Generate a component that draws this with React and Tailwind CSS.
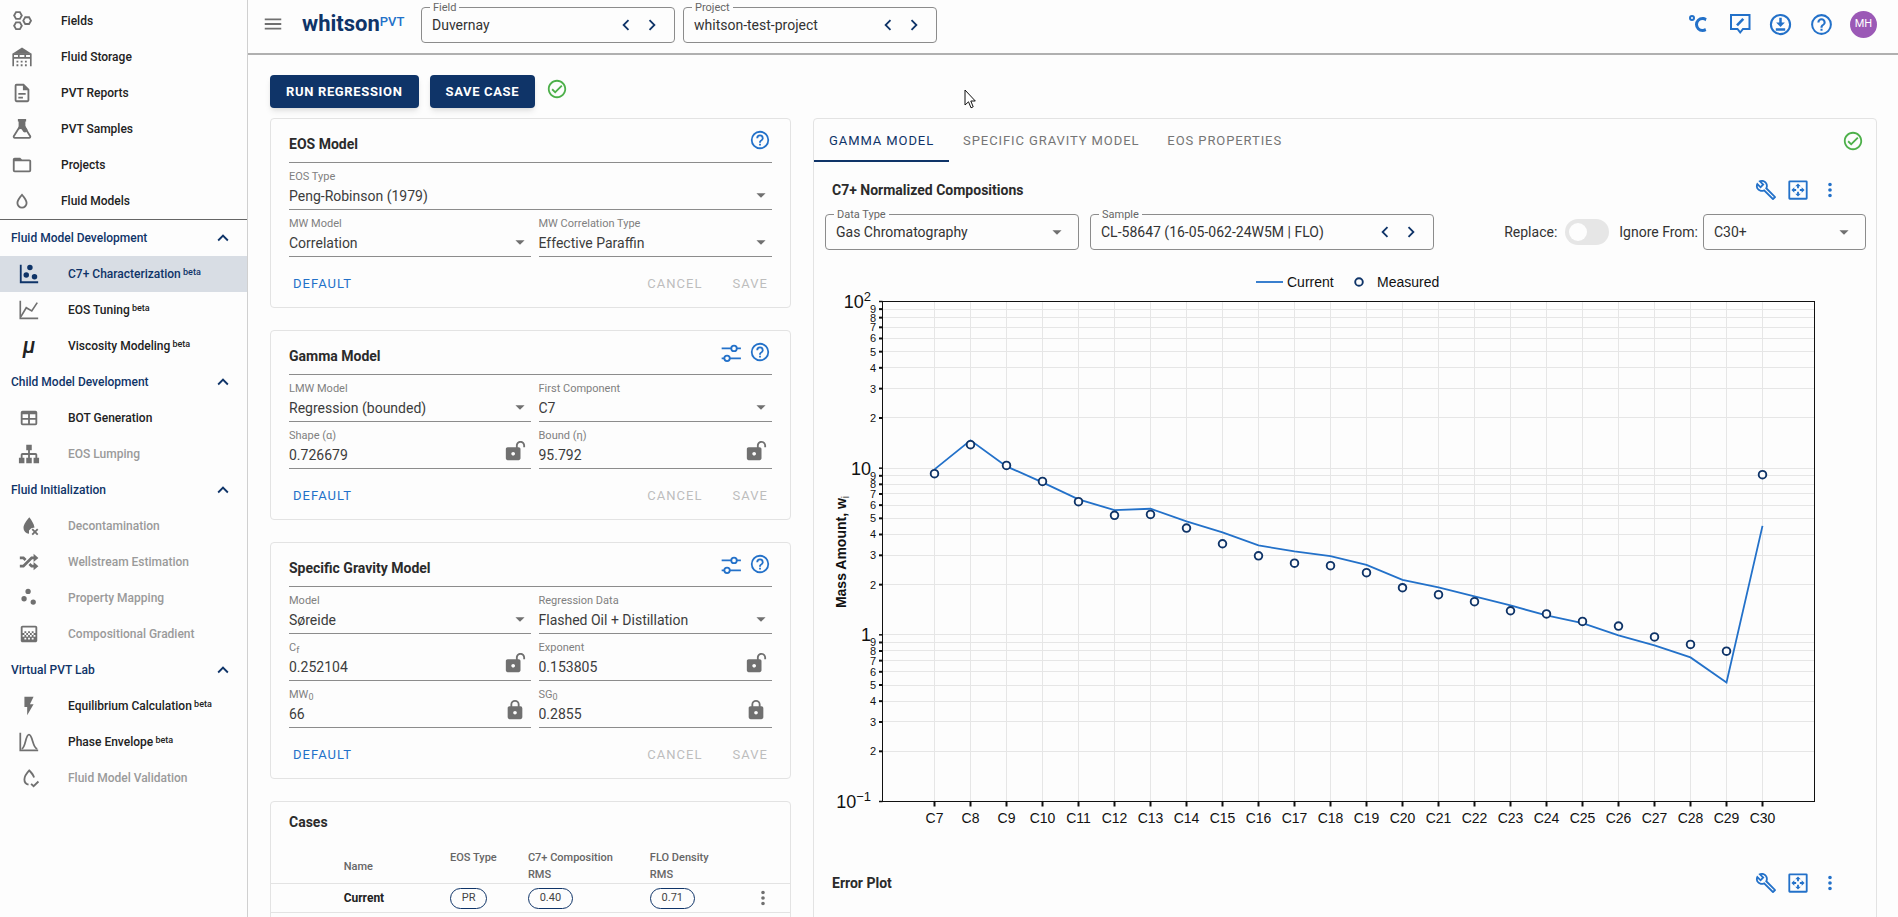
import { useId } from "react";
import { clsx } from "clsx";
import { MdGradient } from "react-icons/md";

const PATHS = {
  help: "M11,18H13V16H11V18M12,2A10,10 0 0,0 2,12A10,10 0 0,0 12,22A10,10 0 0,0 22,12A10,10 0 0,0 12,2M12,20C7.59,20 4,16.41 4,12C4,7.59 7.59,4 12,4C16.41,4 20,7.59 20,12C20,16.41 16.41,20 12,20M12,6A4,4 0 0,0 8,10H10A2,2 0 0,1 12,8A2,2 0 0,1 14,10C14,12 11,11.75 11,15H13C13,12.75 16,12.5 16,10A4,4 0 0,0 12,6Z",
  check: "M12 2C6.5 2 2 6.5 2 12S6.5 22 12 22 22 17.5 22 12 17.5 2 12 2M12 20C7.59 20 4 16.41 4 12S7.59 4 12 4 20 7.59 20 12 16.41 20 12 20M16.59 7.58L10 14.17L7.41 11.59L6 13L10 17L18 9L16.59 7.58Z",
  up: "M7.41,15.41L12,10.83L16.59,15.41L18,14L12,8L6,14L7.41,15.41Z",
  left: "M15.41,16.58L10.83,12L15.41,7.41L14,6L8,12L14,18L15.41,16.58Z",
  right: "M8.59,16.58L13.17,12L8.59,7.41L10,6L16,12L10,18L8.59,16.58Z",
  menu: "M3,6H21V8H3V6M3,11H21V13H3V11M3,16H21V18H3V16Z",
  down: "M7,10L12,15L17,10H7Z",
  dots: "M12,16A2,2 0 0,1 14,18A2,2 0 0,1 12,20A2,2 0 0,1 10,18A2,2 0 0,1 12,16M12,10A2,2 0 0,1 14,12A2,2 0 0,1 12,14A2,2 0 0,1 10,12A2,2 0 0,1 12,10M12,4A2,2 0 0,1 14,6A2,2 0 0,1 12,8A2,2 0 0,1 10,6A2,2 0 0,1 12,4Z",
  lock: "M12,17A2,2 0 0,0 14,15C14,13.89 13.1,13 12,13A2,2 0 0,0 10,15A2,2 0 0,0 12,17M18,8A2,2 0 0,1 20,10V20A2,2 0 0,1 18,22H6A2,2 0 0,1 4,20V10C4,8.89 4.9,8 6,8H7V6A5,5 0 0,1 12,1A5,5 0 0,1 17,6V8H18M12,3A3,3 0 0,0 9,6V8H15V6A3,3 0 0,0 12,3Z",
  unlock: "M18 1C15.24 1 13 3.24 13 6V8H4C2.9 8 2 8.89 2 10V20C2 21.11 2.9 22 4 22H16C17.11 22 18 21.11 18 20V10C18 8.9 17.11 8 16 8H15V6C15 4.34 16.34 3 18 3C19.66 3 21 4.34 21 6V8H23V6C23 3.24 20.76 1 18 1M10 13C11.1 13 12 13.89 12 15C12 16.11 11.11 17 10 17C8.9 17 8 16.11 8 15C8 13.9 8.9 13 10 13Z",
  wrench: "M22.61,19L13.53,9.91C14.46,7.57 14,4.81 12.09,2.91C9.79,0.61 6.21,0.4 3.66,2.26L7.5,6.11L6.08,7.52L2.25,3.69C0.39,6.23 0.6,9.82 2.9,12.11C4.76,13.97 7.47,14.46 9.79,13.59L18.9,22.7C19.29,23.09 19.92,23.09 20.31,22.7L22.61,20.4C23,20 23,19.39 22.61,19M19.61,20.59L10.15,11.13C9.54,11.58 8.86,11.85 8.15,11.95C6.79,12.15 5.36,11.74 4.32,10.7C3.37,9.76 2.93,8.5 3,7.26L6.09,10.35L10.33,6.11L7.24,3C8.48,2.95 9.73,3.39 10.68,4.33C11.76,5.41 12.17,6.9 11.92,8.29C11.8,9 11.5,9.66 11.04,10.25L20.5,19.7L19.61,20.59Z",
  fit: "M3,1.5H21A1.5,1.5 0 0,1 22.5,3V21A1.5,1.5 0 0,1 21,22.5H3A1.5,1.5 0 0,1 1.5,21V3A1.5,1.5 0 0,1 3,1.5M3.5,3.5V20.5H20.5V3.5H3.5M12,4.8L15,8H13V10H11V8H9L12,4.8M12,19.2L9,16H11V14H13V16H15L12,19.2M4.8,12L8,9V11H10V13H8V15L4.8,12M19.2,12L16,15V13H14V11H16V9L19.2,12Z",
  flash: "M7,2V13H10V22L17,10H13L17,2H7Z",
  sitemap: "M9,2V8H11V11H5C3.89,11 3,11.89 3,13V16H1V22H7V16H5V13H11V16H9V22H15V16H13V13H19V16H17V22H23V16H21V13C21,11.89 20.11,11 19,11H13V8H15V2H9Z",
  shuffle: "M17,3L22.25,7.5L17,12L22.25,16.5L17,21V18H14.26L11.44,15.18L13.56,13.06L15.5,15H17V9H15.5L6.5,18H2V15H5.26L14.26,6H17V3M2,6H6.5L9.32,8.82L7.2,10.94L5.26,9H2V6Z",
  scatter: "M2,2H4V20H22V22H2V2M9,10A3,3 0 0,1 12,13A3,3 0 0,1 9,16A3,3 0 0,1 6,13A3,3 0 0,1 9,10M13,2A3,3 0 0,1 16,5A3,3 0 0,1 13,8A3,3 0 0,1 10,5A3,3 0 0,1 13,2M18,12A3,3 0 0,1 21,15A3,3 0 0,1 18,18A3,3 0 0,1 15,15A3,3 0 0,1 18,12Z",
  celsius: "M16.5,5C18.05,5 19.5,5.47 20.69,6.28L19.53,9.17C18.73,8.44 17.67,8 16.5,8C14,8 12,10 12,12.5C12,15 14,17 16.5,17C17.53,17 18.47,16.66 19.23,16.08L20.37,18.93C19.24,19.61 17.92,20 16.5,20A7.5,7.5 0 0,1 9,12.5A7.5,7.5 0 0,1 16.5,5M6,3A3,3 0 0,1 9,6A3,3 0 0,1 6,9A3,3 0 0,1 3,6A3,3 0 0,1 6,3M6,5A1,1 0 0,0 5,6A1,1 0 0,0 6,7A1,1 0 0,0 7,6A1,1 0 0,0 6,5Z",
  table: "M5,4H19A2,2 0 0,1 21,6V18A2,2 0 0,1 19,20H5A2,2 0 0,1 3,18V6A2,2 0 0,1 5,4M5,8V12H11V8H5M13,8V12H19V8H13M5,14V18H11V14H5M13,14V18H19V14H13Z",
  folder: "M20,18H4V8H20M20,6H12L10,4H4C2.89,4 2,4.89 2,6V18A2,2 0 0,0 4,20H20A2,2 0 0,0 22,18V8C22,6.89 21.1,6 20,6Z",
  file: "M6,2A2,2 0 0,0 4,4V20A2,2 0 0,0 6,22H18A2,2 0 0,0 20,20V8L14,2H6M6,4H13V9H18V20H6V4M8,12V14H16V12H8M8,16V18H13V16H8Z",
  water: "M12,3.77L11.25,4.61C11.25,4.61 9.97,6.06 8.68,7.94C7.39,9.82 6,12.07 6,14.23A6,6 0 0,0 12,20.23A6,6 0 0,0 18,14.23C18,12.07 16.61,9.82 15.32,7.94C14.03,6.06 12.75,4.61 12.75,4.61L12,3.77M12,6.9C12.44,7.42 12.84,7.85 13.68,9.07C14.89,10.83 16,13.07 16,14.23C16,16.45 14.22,18.23 12,18.23C9.78,18.23 8,16.45 8,14.23C8,13.07 9.11,10.83 10.32,9.07C11.16,7.85 11.56,7.42 12,6.9Z",
};

function Icon({ name, className = "size-[22px]" }) {
  return (
    <svg viewBox="0 0 24 24" fill="currentColor" className={clsx("shrink-0", className)} aria-hidden="true">
      <path d={PATHS[name]} />
    </svg>
  );
}

function Line({ children, className = "size-[22px]", width = 2 }) {
  return (
    <svg viewBox="0 0 24 24" fill="none" stroke="currentColor" strokeWidth={width} className={clsx("shrink-0", className)} aria-hidden="true">
      {children}
    </svg>
  );
}

const hex = (x, y) => `M${x - 4.2},${y}L${x - 2.1},${y - 3.7}H${x + 2.1}L${x + 4.2},${y}L${x + 2.1},${y + 3.7}H${x - 2.1}Z`;

const FieldsIcon = () => (
  <Line width={2}>
    <path d={hex(7.6, 6)} />
    <path d={hex(17.6, 11.6)} />
    <path d={hex(7.6, 17.2)} />
  </Line>
);

const StorageIcon = () => (
  <Line width={1.8}>
    <path d="M2.4 22V8.5M21.6 22V8.5M2 8.8H22M2 13H22M8.5 8V13M15.5 8V13" />
    <path d="M1.5 8.5L12 1.5L22.5 8.5Z" fill="currentColor" stroke="none" />
    <path d="M6 17H18M6 21H18" strokeWidth="2" strokeDasharray="2 2.6" />
  </Line>
);

const FlaskIcon = () => (
  <Line width={2}>
    <path d="M9.5 3V9.5L3.2 19.5A1.3 1.3 0 0 0 4.4 21.6H19.6A1.3 1.3 0 0 0 20.8 19.5L14.5 9.5V3" />
    <path d="M7.5 1H16.5V3.8H15.5V8.5L18.2 13C16 17.5 13.5 15.5 12.5 13.5C11 11 9.5 12.5 8.2 12.3L8.5 8.5V3.8H7.5Z" fill="currentColor" stroke="none" />
  </Line>
);

const TuningIcon = () => (
  <Line width={1.8}>
    <path d="M2.5 2V21.2H22" />
    <path d="M3 19.5L9 9.5L15 13L21 4" />
  </Line>
);

const MuIcon = () => <span className="w-[22px] text-center text-[22px] leading-none font-medium italic text-[#222]">μ</span>;

const DropXIcon = () => (
  <Line width={2}>
    <path d="M12.3 2.5C9.5 6 6 10.3 6 14.2A6.2 6.2 0 0 0 12 20.4V17L14.5 14.5L18 13.5C17.5 10 14.8 5.6 12.3 2.5Z" fill="currentColor" stroke="none" />
    <path d="M15.5 15.5L21.5 21.5M21.5 15.5L15.5 21.5" />
  </Line>
);

const MappingIcon = () => (
  <svg viewBox="0 0 24 24" fill="currentColor" className="size-[22px]" aria-hidden="true">
    <circle cx="11" cy="4.8" r="2.9" />
    <circle cx="6.6" cy="12.8" r="2.9" />
    <circle cx="16.6" cy="16.4" r="2.9" />
  </svg>
);

const EnvelopeIcon = () => (
  <Line width={1.9}>
    <path d="M2.5 2V21.2H22" />
    <path d="M4 19.5C8.5 18.5 8 4 12 4S15.8 18.5 21 19.5" />
  </Line>
);

const DropCheckIcon = () => (
  <Line width={2}>
    <path d="M17.5 11.5C17 9 14.5 6 12.3 3.8C9.5 6.8 7 10.6 7 13.6A5.8 5.8 0 0 0 11.5 19.3" />
    <path d="M14.3 18.3L17 21L22.3 15.8" />
  </Line>
);

const TuneIcon = () => (
  <Line width={2}>
    <path d="M1.8 7H12.3M18.2 7H22.8M1.8 17.8H4.8M10.7 17.8H22.8" />
    <circle cx="15.3" cy="7" r="3" />
    <circle cx="7.7" cy="17.8" r="3" />
  </Line>
);

const NAV = [
  { label: "Fields", icon: <FieldsIcon /> },
  { label: "Fluid Storage", icon: <StorageIcon /> },
  { label: "PVT Reports", icon: <Icon name="file" /> },
  { label: "PVT Samples", icon: <FlaskIcon /> },
  { label: "Projects", icon: <Icon name="folder" /> },
  { label: "Fluid Models", icon: <Icon name="water" /> },
];

const SECTIONS = [
  {
    title: "Fluid Model Development",
    items: [
      { label: "C7+ Characterization", beta: true, active: true, icon: <Icon name="scatter" /> },
      { label: "EOS Tuning", beta: true, icon: <TuningIcon /> },
      { label: "Viscosity Modeling", beta: true, icon: <MuIcon /> },
    ],
  },
  {
    title: "Child Model Development",
    items: [
      { label: "BOT Generation", icon: <Icon name="table" /> },
      { label: "EOS Lumping", disabled: true, icon: <Icon name="sitemap" /> },
    ],
  },
  {
    title: "Fluid Initialization",
    items: [
      { label: "Decontamination", disabled: true, icon: <DropXIcon /> },
      { label: "Wellstream Estimation", disabled: true, icon: <Icon name="shuffle" /> },
      { label: "Property Mapping", disabled: true, icon: <MappingIcon /> },
      { label: "Compositional Gradient", disabled: true, icon: <MdGradient className="size-[22px]" /> },
    ],
  },
  {
    title: "Virtual PVT Lab",
    items: [
      { label: "Equilibrium Calculation", beta: true, icon: <Icon name="flash" /> },
      { label: "Phase Envelope", beta: true, icon: <EnvelopeIcon /> },
      { label: "Fluid Model Validation", disabled: true, icon: <DropCheckIcon /> },
    ],
  },
];

function Sidebar() {
  return (
    <nav className="w-62 shrink-0 border-r border-[#d0d0d0] pt-[3px] text-[12px] font-medium">
      {NAV.map((item) => (
        <a key={item.label} href="#" className="flex h-9 items-center pl-[11px] text-[#222]">
          <span className="flex w-[50px] text-[#707070]">{item.icon}</span>
          {item.label}
        </a>
      ))}
      <div className="border-t border-[#666]">
        {SECTIONS.map((section) => (
          <div key={section.title}>
            <button className="flex h-9 w-full items-center justify-between pr-[13px] pl-[11px] text-[#0f3468]">
              {section.title}
              <Icon name="up" />
            </button>
            {section.items.map((item) => (
              <a
                key={item.label}
                href="#"
                className={clsx(
                  "flex h-9 items-center pl-[18px]",
                  item.active && "bg-[#d8dde4] text-[#0f3468]",
                  item.disabled && "text-[#9a9a9a]",
                  !item.active && !item.disabled && "text-[#222]"
                )}
              >
                <span className={clsx("flex w-[50px]", item.active ? "text-[#0f3468]" : "text-[#707070]")}>
                  {item.icon}
                </span>
                <span>
                  {item.label}
                  {item.beta && <sup className="top-[-3px] text-[9px]"> beta</sup>}
                </span>
              </a>
            ))}
          </div>
        ))}
      </div>
    </nav>
  );
}

function OutlinedBox({ label, htmlFor, className, children }) {
  return (
    <div className={clsx("relative flex h-9 items-center rounded border border-[#8c8c8c]", className)}>
      {label && (
        <label htmlFor={htmlFor} className="absolute -top-[7px] left-2 bg-[#fdfdfd] px-[3px] text-[11px] leading-[13px] text-[#666]">
          {label}
        </label>
      )}
      {children}
    </div>
  );
}

function StepperField({ label, value, className }) {
  const id = useId();
  return (
    <OutlinedBox label={label} htmlFor={id} className={className}>
      <input id={id} readOnly value={value} className="min-w-0 flex-1 pl-[10px] text-[14px] text-[#333] outline-none" />
      <div className="flex gap-1 pr-[11px] text-[#0f3468]">
        <button aria-label={`Previous ${label}`}><Icon name="left" /></button>
        <button aria-label={`Next ${label}`}><Icon name="right" /></button>
      </div>
    </OutlinedBox>
  );
}

function OutlinedSelect({ label, name, value, className }) {
  const id = useId();
  return (
    <OutlinedBox label={label} htmlFor={id} className={className}>
      <select id={id} aria-label={label || name} className="h-full w-full appearance-none pl-[10px] text-[14px] text-[#333] outline-none">
        <option>{value}</option>
      </select>
      <Icon name="down" className="pointer-events-none absolute right-[10px] size-[22px] text-[#707070]" />
    </OutlinedBox>
  );
}

function Header() {
  return (
    <header className="flex h-[55px] shrink-0 items-start border-b-2 border-[#b0b0b0] pt-[7px] pr-[21px] pl-[14px]">
      <button aria-label="Toggle menu" className="mt-[6px] text-[#707070]"><Icon name="menu" /></button>
      <a href="#" className="flex w-[137px] pl-[18px] leading-[34px] text-[#0f3468]">
        <span className="text-[22px] font-bold">whitson</span>
        <span className="text-[13px] leading-[29px] font-medium text-[#2371c9]">PVT</span>
      </a>
      <StepperField label="Field" value="Duvernay" className="w-[254px]" />
      <StepperField label="Project" value="whitson-test-project" className="ml-2 w-[254px]" />
      <div className="ml-auto flex h-[34px] items-center gap-4 text-[#2371c9]">
        <button aria-label="Units" className="mr-0.5"><Icon name="celsius" className="size-[24px]" /></button>
        <button aria-label="Feedback">
          <Line className="size-[24px]">
            <path d="M3 3H21.5V17H15L12.2 20.5L9.5 17H3Z" />
            <path d="M9 13.3L15.3 6.8" strokeWidth="2.6" />
          </Line>
        </button>
        <button aria-label="Download">
          <Line className="size-[25px]">
            <circle cx="12" cy="12" r="9.2" />
            <path d="M7.5 16.8H16.5M12 5.5V11" strokeWidth="2.4" />
            <path d="M7.8 10H16.2L12 14.3Z" fill="currentColor" stroke="none" />
          </Line>
        </button>
        <button aria-label="Help"><Icon name="help" className="size-[25px]" /></button>
        <button className="size-[27px] rounded-full bg-[#9b59b6] text-[11px] text-white">MH</button>
      </div>
    </header>
  );
}

function LineField({ label, value, lock, className }) {
  const id = useId();
  return (
    <div className={clsx("h-[47px]", className)}>
      <div className="relative flex h-full flex-col border-b border-[#8c8c8c] pt-[7px]">
        <label htmlFor={id} className="h-[14px] text-[11px] leading-[14px] text-[#808080] [&_sub]:text-[9px]">{label}</label>
        {lock ? (
          <>
            <input id={id} defaultValue={value} className="h-6 w-full pr-8 text-[14px] text-[#3c3c3c] outline-none" />
            <button aria-label={lock} className="absolute right-[5px] bottom-[6px] text-[#707070]"><Icon name={lock} /></button>
          </>
        ) : (
          <>
            <select id={id} className="h-6 w-full appearance-none text-[14px] text-[#3c3c3c] outline-none">
              <option>{value}</option>
            </select>
            <Icon name="down" className="pointer-events-none absolute right-0 bottom-[3px] size-[22px] text-[#707070]" />
          </>
        )}
      </div>
    </div>
  );
}

function ModelCard({ title, tune, children }) {
  return (
    <section className="rounded border border-[#e3e3e3] px-[18px]">
      <div className="flex h-11 items-center border-b border-[#8c8c8c] pt-[7px]">
        <h2 className="flex-1 text-[14px] font-bold text-[#2b2b2b]">{title}</h2>
        <div className="flex gap-[7px] pr-[1px] pb-2 text-[#2371c9]">
          {tune && <button aria-label="Settings" className="pt-[2px]"><TuneIcon /></button>}
          <button aria-label="Help"><Icon name="help" /></button>
        </div>
      </div>
      <div className="grid grid-cols-2">{children}</div>
      <div className="flex h-[50px] items-center px-1 pt-1 text-[13px] tracking-[0.08em] text-[#bdbdbd]">
        <button className="mr-auto text-[#2371c9]">DEFAULT</button>
        <button disabled>CANCEL</button>
        <button disabled className="ml-[30px]">SAVE</button>
      </div>
    </section>
  );
}

function Chip({ children, className }) {
  return (
    <span className={clsx("flex h-[21px] items-center justify-center rounded-full border border-[#0f3468] text-[11px] text-[#444]", className)}>
      {children}
    </span>
  );
}

function CasesCard() {
  return (
    <section className="rounded border border-[#e3e3e3]">
      <h2 className="pt-[10px] pl-[18px] text-[14px] leading-5 font-bold text-[#2b2b2b]">Cases</h2>
      <table className="mt-[17px] w-full table-fixed text-left text-[11px]">
        <colgroup>
          <col className="w-[14%]" />
          <col className="w-[20.5%]" />
          <col className="w-[15%]" />
          <col className="w-[23.5%]" />
          <col className="w-[17%]" />
          <col />
        </colgroup>
        <thead className="text-[#666]">
          <tr className="h-[34px] border-b border-[#e3e3e3] align-top leading-[17px] [&>th]:font-medium">
            <th />
            <th className="align-middle">Name</th>
            <th>EOS Type</th>
            <th>C7+ Composition<br />RMS</th>
            <th>FLO Density<br />RMS</th>
            <th />
          </tr>
        </thead>
        <tbody>
          <tr className="h-[29px] border-b border-[#e3e3e3]">
            <td />
            <td className="text-[12px] font-bold text-[#222]">Current</td>
            <td><Chip className="w-[37px]">PR</Chip></td>
            <td><Chip className="w-[45px]">0.40</Chip></td>
            <td><Chip className="w-[45px]">0.71</Chip></td>
            <td>
              <button aria-label="Case actions" className="flex pl-[14px] text-[#707070]"><Icon name="dots" /></button>
            </td>
          </tr>
          <tr className="h-[29px]"><td colSpan={6} /></tr>
        </tbody>
      </table>
    </section>
  );
}

const MEASURED = [9.27, 13.84, 10.39, 8.33, 6.29, 5.21, 5.28, 4.37, 3.52, 2.98, 2.69, 2.6, 2.36, 1.917, 1.741, 1.58, 1.395, 1.335, 1.203, 1.128, 0.971, 0.876, 0.798, 9.14];
const CURRENT = [9.84, 14.69, 10.25, 8.22, 6.5, 5.6, 5.71, 4.79, 4.12, 3.44, 3.17, 2.97, 2.63, 2.14, 1.925, 1.7, 1.501, 1.307, 1.176, 0.992, 0.864, 0.732, 0.518, 4.505];

const PLOT = { left: 68.5, right: 1000.5, top: 39.5, bottom: 539.5 };
const xAt = (i) => 120.5 + i * 36;
const yAt = (v) => PLOT.top + ((2 - Math.log10(v)) * (PLOT.bottom - PLOT.top)) / 3;
const snap = (y) => Math.floor(y) + 0.5;

const MINOR = [0.1, 1, 10].flatMap((decade) => [2, 3, 4, 5, 6, 7, 8, 9].map((n) => ({ n, v: n * decade })));

function CompositionChart() {
  return (
    <svg viewBox="0 0 1062 598" className="block w-full font-['Liberation_Sans',sans-serif] text-[14px]" role="img" aria-label="C7+ normalized compositions" fill="#111">
      <line x1="442" x2="469" y1="20" y2="20" stroke="#2371c9" strokeWidth="1.8" />
      <text x="473" y="25">Current</text>
      <circle cx="545" cy="20" r="3.8" fill="none" stroke="#0f3468" strokeWidth="1.9" />
      <text x="563" y="25">Measured</text>

      <g stroke="#e6e6e6">
        {MEASURED.map((_, i) => (
          <line key={i} x1={xAt(i)} x2={xAt(i)} y1={PLOT.top} y2={PLOT.bottom} />
        ))}
        {[...MINOR.map((m) => m.v), 1, 10].map((v) => (
          <line key={v} x1={PLOT.left} x2={PLOT.right} y1={snap(yAt(v))} y2={snap(yAt(v))} />
        ))}
      </g>
      <rect x={PLOT.left} y={PLOT.top} width={PLOT.right - PLOT.left} height={PLOT.bottom - PLOT.top} fill="none" stroke="#111" />

      <g textAnchor="middle">
        {MEASURED.map((_, i) => (
          <g key={i}>
            <line x1={xAt(i)} x2={xAt(i)} y1={PLOT.bottom} y2={PLOT.bottom + 5} stroke="#111" strokeWidth="2" />
            <text x={xAt(i)} y="561">{`C${i + 7}`}</text>
          </g>
        ))}
      </g>
      <g textAnchor="end" className="text-[11px]">
        {MINOR.map(({ n, v }) => (
          <g key={v}>
            <line x1={PLOT.left - 3.5} x2={PLOT.left} y1={yAt(v)} y2={yAt(v)} stroke="#111" strokeWidth="2" />
            <text x="62" y={yAt(v) + 4}>{n}</text>
          </g>
        ))}
      </g>
      {[100, 10, 1, 0.1].map((v) => (
        <line key={v} x1={PLOT.left - 3.5} x2={PLOT.left} y1={yAt(v)} y2={yAt(v)} stroke="#111" strokeWidth="1.5" />
      ))}
      <g textAnchor="end" className="text-[18px]">
        <text x="57" y="46">10<tspan dy="-7" className="text-[13px]">2</tspan></text>
        <text x="57" y="213">10</text>
        <text x="57" y="379">1</text>
        <text x="57" y="546">10<tspan dy="-7" className="text-[13px]">−1</tspan></text>
      </g>
      <text transform="translate(32 290) rotate(-90)" textAnchor="middle" className="font-bold">
        Mass Amount, w<tspan dy="3" className="text-[10px] font-normal">i</tspan>
      </text>

      <polyline points={CURRENT.map((v, i) => `${xAt(i)},${yAt(v)}`).join(" ")} fill="none" stroke="#2371c9" strokeWidth="1.8" />
      {MEASURED.map((v, i) => (
        <circle key={i} cx={xAt(i)} cy={yAt(v)} r="3.8" fill="#fdfdfd" stroke="#0f3468" strokeWidth="1.9" />
      ))}
    </svg>
  );
}

function PlotHeader({ title }) {
  return (
    <div className="flex h-10 items-center pr-[35px] pl-[18px]">
      <h2 className="flex-1 text-[14px] font-bold text-[#2b2b2b]">{title}</h2>
      <div className="flex gap-[10px] text-[#2371c9]">
        <button aria-label="Plot settings"><Icon name="wrench" /></button>
        <button aria-label="Fit plot"><Icon name="fit" /></button>
        <button aria-label="Plot actions"><Icon name="dots" /></button>
      </div>
    </div>
  );
}

function PlotCard() {
  return (
    <section className="col-span-2 rounded border border-[#e3e3e3]">
      <div className="flex h-[43px] items-stretch text-[13px] tracking-[0.07em] text-[#757575]" role="tablist">
        <button role="tab" aria-selected="true" className="border-b-2 border-[#0f3468] px-[15px] pt-0.5 text-[#0f3468]">GAMMA MODEL</button>
        <button role="tab" aria-selected="false" className="px-[14px]">SPECIFIC GRAVITY MODEL</button>
        <button role="tab" aria-selected="false" className="px-[14px]">EOS PROPERTIES</button>
        <Icon name="check" className="mr-3 ml-auto size-[22px] self-center text-[#4db04a]" />
      </div>
      <div className="pt-2">
        <PlotHeader title="C7+ Normalized Compositions" />
      </div>
      <div className="mt-1 flex items-center pr-[10px] pl-[11px] text-[14px] text-[#333]">
        <OutlinedSelect label="Data Type" value="Gas Chromatography" className="w-[254px]" />
        <StepperField label="Sample" value="CL-58647 (16-05-062-24W5M | FLO)" className="ml-[11px] w-[344px]" />
        <label htmlFor="replace" className="mr-2 ml-auto">Replace:</label>
        <input
          id="replace"
          type="checkbox"
          role="switch"
          className="mr-[10px] flex h-[26px] w-11 appearance-none items-center rounded-full bg-[#e6e6e6] px-1 before:size-[18px] before:rounded-full before:bg-[#fdfdfd]"
        />
        <span className="mr-[5px]">Ignore From:</span>
        <OutlinedSelect name="Ignore From" value="C30+" className="w-[163px]" />
      </div>
      <div className="mt-3">
        <CompositionChart />
      </div>
      <div className="pt-[3px] pb-24">
        <PlotHeader title="Error Plot" />
      </div>
    </section>
  );
}

function Pointer() {
  return (
    <svg viewBox="0 0 12 20" className="pointer-events-none fixed top-[89px] left-[964px] h-5 w-3" aria-hidden="true">
      <path d="M1 1V16L4.5 12.8L7 18.8L9.2 17.8L6.8 12H11.3Z" fill="#fff" stroke="#111" />
    </svg>
  );
}

export default function App() {
  return (
    <div className="flex h-screen overflow-hidden bg-[#fdfdfd] font-[Roboto,sans-serif] text-[#222]">
      <Sidebar />
      <div className="flex min-w-0 flex-1 flex-col">
        <Header />
        <main className="min-h-0 flex-1 overflow-hidden pt-5 pr-[21px] pl-[22px]">
          <div className="flex items-start gap-[11px] text-[13px] font-bold tracking-wider text-white">
            <button className="h-[33px] rounded bg-[#0f3468] px-4 shadow-md">RUN REGRESSION</button>
            <button className="h-[33px] rounded bg-[#0f3468] px-4 shadow-md">SAVE CASE</button>
            <Icon name="check" className="mt-[3px] size-[22px] text-[#4db04a]" />
          </div>
          <div className="mt-[10px] grid grid-cols-3 gap-[22px]">
            <div className="flex flex-col gap-[22px]">
              <ModelCard title="EOS Model">
                <LineField label="EOS Type" value="Peng-Robinson (1979)" className="col-span-2" />
                <LineField label="MW Model" value="Correlation" />
                <LineField label="MW Correlation Type" value="Effective Paraffin" className="pl-2" />
              </ModelCard>
              <ModelCard title="Gamma Model" tune>
                <LineField label="LMW Model" value="Regression (bounded)" />
                <LineField label="First Component" value="C7" className="pl-2" />
                <LineField label="Shape (α)" value="0.726679" lock="unlock" />
                <LineField label="Bound (η)" value="95.792" lock="unlock" className="pl-2" />
              </ModelCard>
              <ModelCard title="Specific Gravity Model" tune>
                <LineField label="Model" value="Søreide" />
                <LineField label="Regression Data" value="Flashed Oil + Distillation" className="pl-2" />
                <LineField label={<>C<sub>f</sub></>} value="0.252104" lock="unlock" />
                <LineField label="Exponent" value="0.153805" lock="unlock" className="pl-2" />
                <LineField label={<>MW<sub>0</sub></>} value="66" lock="lock" />
                <LineField label={<>SG<sub>0</sub></>} value="0.2855" lock="lock" className="pl-2" />
              </ModelCard>
              <CasesCard />
            </div>
            <PlotCard />
          </div>
        </main>
      </div>
      <Pointer />
    </div>
  );
}
